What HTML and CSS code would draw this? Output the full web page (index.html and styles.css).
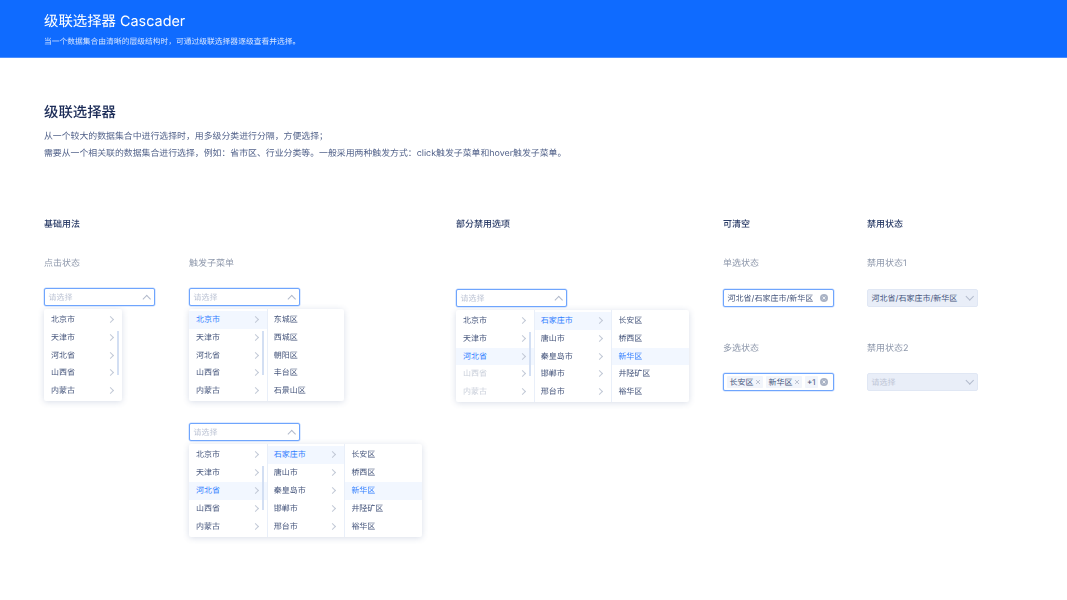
FILE: index.html
```html
<!DOCTYPE html>
<html lang="zh-CN">
<head>
<meta charset="utf-8">
<title>级联选择器 Cascader</title>
<link rel="stylesheet" href="styles.css">
</head>
<body>
<header class="banner">
  <h1>级联选择器 Cascader</h1>
  <p>当一个数据集合由清晰的层级结构时，可通过级联选择器逐级查看并选择。</p>
</header>
<main class="page">
  <h2>级联选择器</h2>
  <p class="intro">从一个较大的数据集合中进行选择时，用多级分类进行分隔，方便选择；</p>
  <p class="intro">需要从一个相关联的数据集合进行选择，例如：省市区、行业分类等。一般采用两种触发方式：click触发子菜单和hover触发子菜单。</p>

  <div class="sections">
    <section class="sec-basic">
      <h3>基础用法</h3>
      <div class="pair">
        <div class="stack">
          <div class="label">点击状态</div>
          <div class="input focus"><span class="ph">请选择</span><i class="up"></i></div>
          <div class="menu">
            <div class="col bar">
              <div class="item">北京市</div><div class="item">天津市</div><div class="item">河北省</div><div class="item">山西省</div><div class="item">内蒙古</div>
            </div>
          </div>
        </div>
        <div class="stack">
          <div class="label">触发子菜单</div>
          <div class="input focus"><span class="ph">请选择</span><i class="up"></i></div>
          <div class="menu">
            <div class="col bar">
              <div class="item on">北京市</div><div class="item">天津市</div><div class="item">河北省</div><div class="item">山西省</div><div class="item">内蒙古</div>
            </div>
            <div class="col">
              <div class="leaf">东城区</div><div class="leaf">西城区</div><div class="leaf">朝阳区</div><div class="leaf">丰台区</div><div class="leaf">石景山区</div>
            </div>
          </div>
          <div class="input focus second"><span class="ph">请选择</span><i class="up"></i></div>
          <div class="menu">
            <div class="col bar">
              <div class="item">北京市</div><div class="item">天津市</div><div class="item on">河北省</div><div class="item">山西省</div><div class="item">内蒙古</div>
            </div>
            <div class="col">
              <div class="item on">石家庄市</div><div class="item">唐山市</div><div class="item">秦皇岛市</div><div class="item">邯郸市</div><div class="item">邢台市</div>
            </div>
            <div class="col">
              <div class="leaf">长安区</div><div class="leaf">桥西区</div><div class="leaf on">新华区</div><div class="leaf">井陉矿区</div><div class="leaf">裕华区</div>
            </div>
          </div>
        </div>
      </div>
    </section>

    <section>
      <h3>部分禁用选项</h3>
      <div class="stack low">
        <div class="input focus"><span class="ph">请选择</span><i class="up"></i></div>
        <div class="menu">
          <div class="col bar">
            <div class="item">北京市</div><div class="item">天津市</div><div class="item on">河北省</div><div class="item off">山西省</div><div class="item off">内蒙古</div>
          </div>
          <div class="col">
            <div class="item on">石家庄市</div><div class="item">唐山市</div><div class="item">秦皇岛市</div><div class="item">邯郸市</div><div class="item">邢台市</div>
          </div>
          <div class="col">
            <div class="leaf">长安区</div><div class="leaf">桥西区</div><div class="leaf on">新华区</div><div class="leaf">井陉矿区</div><div class="leaf">裕华区</div>
          </div>
        </div>
      </div>
    </section>

    <section>
      <h3>可清空</h3>
      <div class="stack">
        <div class="label">单选状态</div>
        <div class="input focus nudge"><span class="val">河北省/石家庄市/新华区</span>
          <svg class="clear" viewBox="0 0 8 8"><circle cx="4" cy="4" r="4" fill="#aab3c5"/><path d="M2.6 2.6l2.8 2.8M5.4 2.6L2.6 5.4" stroke="#fff" stroke-width=".8"/></svg>
        </div>
        <div class="label row2">多选状态</div>
        <div class="input focus tags">
          <span class="tag">长安区<svg class="x" viewBox="0 0 6 6"><path d="M1 1l4 4M5 1L1 5" stroke="#a3adc0" stroke-width=".7"/></svg></span>
          <span class="tag">新华区<svg class="x" viewBox="0 0 6 6"><path d="M1 1l4 4M5 1L1 5" stroke="#a3adc0" stroke-width=".7"/></svg></span>
          <span class="tag more">+1</span>
          <svg class="clear" viewBox="0 0 8 8"><circle cx="4" cy="4" r="4" fill="#aab3c5"/><path d="M2.6 2.6l2.8 2.8M5.4 2.6L2.6 5.4" stroke="#fff" stroke-width=".8"/></svg>
        </div>
      </div>
    </section>

    <section>
      <h3>禁用状态</h3>
      <div class="stack">
        <div class="label">禁用状态1</div>
        <div class="input dis nudge"><span class="val">河北省/石家庄市/新华区</span><i class="down"></i></div>
        <div class="label row2">禁用状态2</div>
        <div class="input dis tagsgap"><span class="ph">请选择</span><i class="down"></i></div>
      </div>
    </section>
  </div>
</main>
</body>
</html>
```
FILE: styles.css
```css
* { box-sizing: border-box; }
html, body { margin: 0; padding: 0; }
body {
  background: #fff;
  color: #43537a;
  font-family: Inter, "Noto Sans CJK SC", sans-serif;
  font-size: 8px;
  text-rendering: geometricPrecision;
  height: 600px;
  overflow: hidden;
  filter: blur(.3px);
}
h1, h2, h3, p { margin: 0; font-weight: 400; }

.banner {
  height: 58px;
  padding: 13px 44px 0;
  background: #0f6bff;
  border-bottom: 1px solid #4a8eff;
  color: #fff;
}
.banner h1 { font-size: 14.4px; line-height: 18px; }
.banner p { margin-top: 2px; font-size: 7.78px; line-height: 16px; color: #d5e4ff; }

.page { padding: 45px 44px 0; }
h2 { font-size: 14.4px; line-height: 20px; font-weight: 500; color: #1b2b57; }
.intro { font-size: 8.9px; line-height: 17px; color: #52628a; }
h2 + .intro { margin-top: 5px; }

.sections {
  display: grid;
  grid-template-columns: 412px 267px 144px 111px;
  margin-top: 56px;
}
h3 { font-size: 9px; line-height: 14px; font-weight: 500; color: #2b3d68; }

.pair { display: grid; grid-template-columns: 145px 1fr; }
.stack { display: flex; flex-direction: column; align-items: flex-start; }
.low { padding-top: 57px; }

.label { margin-top: 25px; height: 14px; font-size: 9px; line-height: 14px; color: #8f99ac; }
.label.row2 { margin-top: 35px; }

.input {
  position: relative;
  display: flex;
  align-items: center;
  width: 111px;
  height: 18px;
  margin-top: 17px;
  padding: 0 3.5px;
  border-radius: 2px;
  line-height: 16px;
  white-space: nowrap;
}
.low .input { margin-top: 0; }
.nudge { margin-top: 18px; }
.tagsgap, .tags { margin-top: 17px; }
.second { margin-top: 22px; }
.focus { border: 1px solid #6fa5fd; background: #fff; box-shadow: 0 0 0 .5px rgba(127, 176, 255, .5); }
.dis { border: 1px solid #e0e7f4; background: #e9eef8; }
.ph { color: #bfc6d6; }
.val { color: #43537a; }

.up, .down {
  position: absolute;
  right: 5px;
  width: 5.5px;
  height: 5.5px;
  border-left: 1px solid #b2bacb;
  border-top: 1px solid #b2bacb;
}
.up { top: 6.5px; transform: rotate(45deg); }
.down { top: 3.5px; transform: rotate(225deg); }

.clear { position: absolute; right: 5px; top: 4px; width: 8px; height: 8px; }

.tags { padding: 0 0 0 3px; gap: 3px; }
.tag {
  display: flex;
  align-items: center;
  height: 12px;
  width: 36px;
  padding-left: 2.5px;
  background: #f2f5fb;
  border-radius: 1px;
  color: #43537a;
}
.tag.more { width: 13px; padding-left: 2px; }
.x { width: 6px; height: 6px; margin-left: 1px; }

.menu {
  display: flex;
  margin-top: 2.5px;
  background: #fff;
  border-radius: 2px;
  box-shadow: 0 1px 6px rgba(60, 85, 140, .2);
}
.col { position: relative; width: 77.7px; padding: 2.5px 0 1.5px; }
.col + .col { border-left: 1px solid #e9eff9; }
.col + .col .item, .col + .col .leaf { padding-left: 6px; }
.bar::after {
  content: "";
  position: absolute;
  right: 3px;
  top: 22px;
  width: 1.5px;
  height: 44px;
  background: #d3dff3;
}
.item, .leaf {
  position: relative;
  height: 17.8px;
  padding-left: 7px;
  line-height: 17.8px;
  color: #43537a;
  white-space: nowrap;
}
.item::after {
  content: "";
  position: absolute;
  right: 9px;
  top: 6px;
  width: 4px;
  height: 4px;
  border-top: 1px solid #c2c9d6;
  border-right: 1px solid #c2c9d6;
  transform: rotate(45deg);
}
.item.on, .leaf.on { background: #f2f7ff; color: #2f7dff; }
.item.off { color: #c9cfda; }
```
